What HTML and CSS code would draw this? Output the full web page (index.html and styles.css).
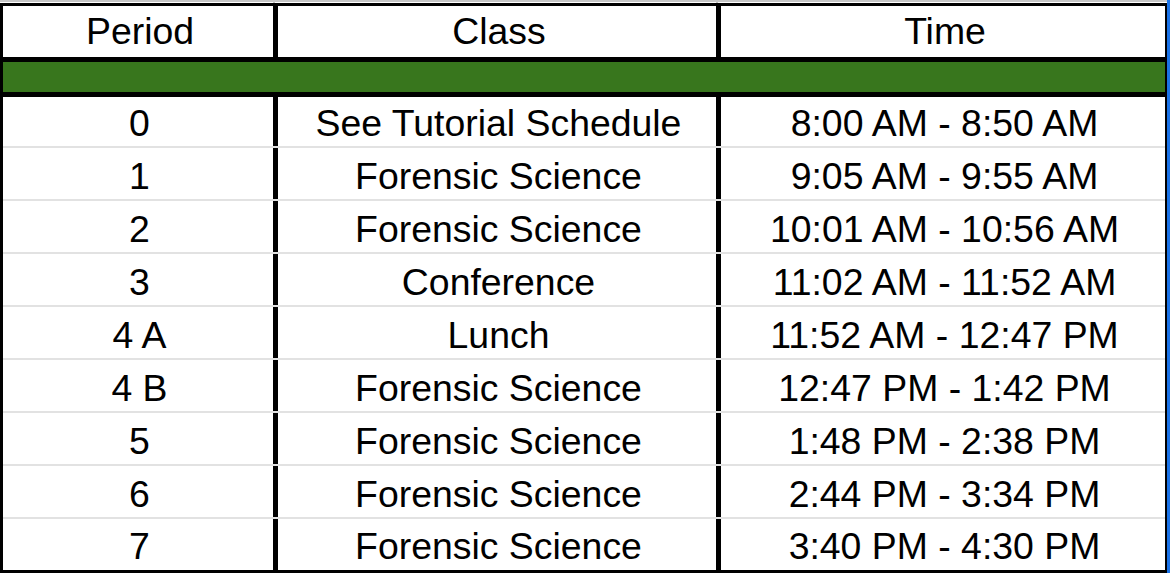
FILE: index.html
```html
<!DOCTYPE html>
<html>
<head>
<meta charset="utf-8">
<link rel="stylesheet" href="styles.css">
</head>
<body>
<div class="page">
  <div class="main">
    <div class="topbar"><span class="tick"></span><span class="tick"></span><span></span></div>
    <div class="sheet">
      <div class="row head">
        <div class="cell">Period</div>
        <div class="cell">Class</div>
        <div class="cell last">Time</div>
      </div>
      <div class="band"></div>
      <div class="row data first">
        <div class="cell">0</div>
        <div class="cell">See Tutorial Schedule</div>
        <div class="cell last">8:00 AM - 8:50 AM</div>
      </div>
      <div class="row data">
        <div class="cell">1</div>
        <div class="cell">Forensic Science</div>
        <div class="cell last">9:05 AM - 9:55 AM</div>
      </div>
      <div class="row data">
        <div class="cell">2</div>
        <div class="cell">Forensic Science</div>
        <div class="cell last">10:01 AM - 10:56 AM</div>
      </div>
      <div class="row data">
        <div class="cell">3</div>
        <div class="cell">Conference</div>
        <div class="cell last">11:02 AM - 11:52 AM</div>
      </div>
      <div class="row data">
        <div class="cell">4 A</div>
        <div class="cell">Lunch</div>
        <div class="cell last">11:52 AM - 12:47 PM</div>
      </div>
      <div class="row data">
        <div class="cell">4 B</div>
        <div class="cell">Forensic Science</div>
        <div class="cell last">12:47 PM - 1:42 PM</div>
      </div>
      <div class="row data">
        <div class="cell">5</div>
        <div class="cell">Forensic Science</div>
        <div class="cell last">1:48 PM - 2:38 PM</div>
      </div>
      <div class="row data">
        <div class="cell">6</div>
        <div class="cell">Forensic Science</div>
        <div class="cell last">2:44 PM - 3:34 PM</div>
      </div>
      <div class="row data final">
        <div class="cell">7</div>
        <div class="cell">Forensic Science</div>
        <div class="cell last">3:40 PM - 4:30 PM</div>
      </div>
    </div>
  </div>
  <div class="selection"></div>
</div>
</body>
</html>
```

FILE: styles.css
```css
* { box-sizing: border-box; }
html, body { margin: 0; padding: 0; }
body {
  width: 1170px;
  height: 573px;
  overflow: hidden;
  background: #ffffff;
  font-family: "Liberation Sans", Arial, sans-serif;
  color: #000000;
}
.page {
  display: flex;
  width: 1170px;
  height: 573px;
}
.main {
  width: 1167px;
  display: flex;
  flex-direction: column;
}
.selection {
  width: 3px;
  background: #1a73e8;
}
.topbar {
  height: 3px;
  border-top: 2px solid #c6c6c6;
  display: grid;
  grid-template-columns: 275px 443px 1fr;
}
.topbar .tick {
  border-right: 2px solid #c6c6c6;
}
.sheet {
  flex: 1;
  border-top: 3px solid #000;
  border-left: 3px solid #000;
  border-right: 2px solid #000;
  border-bottom: 3px solid #000;
  display: flex;
  flex-direction: column;
}
.row {
  display: grid;
  grid-template-columns: 275px 443px 444px;
}
.cell {
  display: flex;
  align-items: center;
  justify-content: center;
  font-size: 37.4px;
  white-space: nowrap;
  padding-left: 3px;
  border-right: 5px solid #000;
}
.cell.last { border-right: none; }
.head { height: 56px; border-bottom: 5px solid #000; }
.head .cell { padding-left: 4px; }
.band { height: 35px; background: #38761d; border-bottom: 5px solid #000; }
.data { height: 53px; border-bottom: 2px solid #e2e2e2; }
.data .cell { padding-top: 6px; }
.data.first .cell { padding-top: 4px; }
.data.first { height: 51px; }
.data.final { height: auto; flex: 1; border-bottom: none; }
.data.final .cell { padding-top: 3px; }
```
